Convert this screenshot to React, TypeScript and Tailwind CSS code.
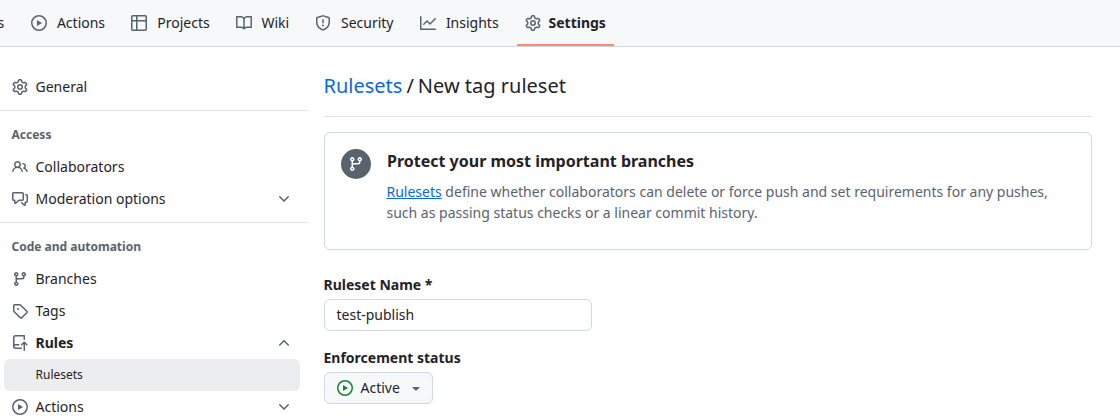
import type { ReactNode } from "react";

const paths = {
  play: "M8 0a8 8 0 1 1 0 16A8 8 0 0 1 8 0ZM1.5 8a6.5 6.5 0 1 0 13 0 6.5 6.5 0 0 0-13 0Zm4.879-2.773 4.264 2.559a.25.25 0 0 1 0 .428l-4.264 2.559A.25.25 0 0 1 6 10.559V5.442a.25.25 0 0 1 .379-.215Z",
  table:
    "M0 1.75C0 .784.784 0 1.75 0h12.5C15.216 0 16 .784 16 1.75v12.5A1.75 1.75 0 0 1 14.25 16H1.75A1.75 1.75 0 0 1 0 14.25ZM6.5 6.5v8h7.75a.25.25 0 0 0 .25-.25V6.5Zm8-1.5V1.75a.25.25 0 0 0-.25-.25H6.5V5Zm-13 1.5v7.75c0 .138.112.25.25.25H5v-8ZM5 5V1.5H1.75a.25.25 0 0 0-.25.25V5Z",
  book: "M0 1.75A.75.75 0 0 1 .75 1h4.253c1.227 0 2.317.59 3 1.501A3.743 3.743 0 0 1 11.006 1h4.245a.75.75 0 0 1 .75.75v10.5a.75.75 0 0 1-.75.75h-4.507a2.25 2.25 0 0 0-1.591.659l-.622.621a.75.75 0 0 1-1.06 0l-.622-.621A2.25 2.25 0 0 0 5.258 13H.75a.75.75 0 0 1-.75-.75Zm7.251 10.324.004-5.073-.002-2.253A2.25 2.25 0 0 0 5.003 2.5H1.5v9h3.757a3.75 3.75 0 0 1 1.994.574ZM8.755 4.75l-.004 7.322a3.752 3.752 0 0 1 1.992-.572H14.5v-9h-3.495a2.25 2.25 0 0 0-2.25 2.25Z",
  shield:
    "M7.467.133a1.748 1.748 0 0 1 1.066 0l5.25 1.68A1.75 1.75 0 0 1 15 3.48V7c0 1.566-.32 3.182-1.303 4.682-.983 1.498-2.585 2.813-5.032 3.855a1.697 1.697 0 0 1-1.33 0c-2.447-1.042-4.049-2.357-5.032-3.855C1.32 10.182 1 8.566 1 7V3.48a1.75 1.75 0 0 1 1.217-1.667Zm.61 1.429a.25.25 0 0 0-.153 0l-5.25 1.68a.25.25 0 0 0-.174.238V7c0 1.358.275 2.666 1.057 3.86.784 1.194 2.121 2.34 4.366 3.297a.196.196 0 0 0 .154 0c2.245-.956 3.582-2.104 4.366-3.298C13.225 9.666 13.5 8.36 13.5 7V3.48a.251.251 0 0 0-.174-.237l-5.25-1.68ZM8.75 4.75v3a.75.75 0 0 1-1.5 0v-3a.75.75 0 0 1 1.5 0ZM9 10.5a1 1 0 1 1-2 0 1 1 0 0 1 2 0Z",
  graph:
    "M1.5 1.75V13.5h13.75a.75.75 0 0 1 0 1.5H.75a.75.75 0 0 1-.75-.75V1.75a.75.75 0 0 1 1.5 0Zm14.28 2.53-5.25 5.25a.75.75 0 0 1-1.06 0L7 7.06 4.28 9.78a.751.751 0 0 1-1.042-.018.751.751 0 0 1-.018-1.042l3.25-3.25a.75.75 0 0 1 1.06 0L10 7.94l4.72-4.72a.751.751 0 0 1 1.042.018.751.751 0 0 1 .018 1.042Z",
  gear: "M8 0a8.2 8.2 0 0 1 .701.031C9.444.095 9.99.645 10.16 1.29l.288 1.107c.018.066.079.158.212.224.231.114.454.243.668.386.123.082.233.09.299.071l1.103-.303c.644-.176 1.392.021 1.82.63.27.385.506.792.704 1.218.315.675.111 1.422-.364 1.891l-.814.806c-.049.048-.098.147-.088.294.016.257.016.515 0 .772-.01.147.038.246.088.294l.814.806c.475.469.679 1.216.364 1.891a7.977 7.977 0 0 1-.704 1.217c-.428.61-1.176.807-1.82.63l-1.102-.302c-.067-.019-.177-.011-.3.071a5.909 5.909 0 0 1-.668.386c-.133.066-.194.158-.211.224l-.29 1.106c-.168.646-.715 1.196-1.458 1.26a8.006 8.006 0 0 1-1.402 0c-.743-.064-1.289-.614-1.458-1.26l-.289-1.106c-.018-.066-.079-.158-.212-.224a5.738 5.738 0 0 1-.668-.386c-.123-.082-.233-.09-.299-.071l-1.103.303c-.644.176-1.392-.021-1.82-.63a8.12 8.12 0 0 1-.704-1.218c-.315-.675-.111-1.422.363-1.891l.815-.806c.05-.048.098-.147.088-.294a6.214 6.214 0 0 1 0-.772c.01-.147-.038-.246-.088-.294l-.815-.806C.635 6.045.431 5.298.746 4.623a7.92 7.92 0 0 1 .704-1.217c.428-.61 1.176-.807 1.82-.63l1.102.302c.067.019.177.011.3-.071.214-.143.437-.272.668-.386.133-.066.194-.158.211-.224l.29-1.106C6.009.645 6.556.095 7.299.03 7.53.01 7.764 0 8 0Zm-.571 1.525c-.036.003-.108.036-.137.146l-.289 1.105c-.147.561-.549.967-.998 1.189-.173.086-.34.183-.5.29-.417.278-.97.423-1.529.27l-1.103-.303c-.109-.03-.175.016-.195.045-.22.312-.412.644-.573.99-.014.031-.021.11.059.19l.815.806c.411.406.562.957.53 1.456a4.709 4.709 0 0 0 0 .582c.032.499-.119 1.05-.53 1.456l-.815.806c-.081.08-.073.159-.059.19.162.346.353.677.573.989.02.03.085.076.195.046l1.102-.303c.56-.153 1.113-.008 1.53.27.161.107.328.204.501.29.447.222.85.629.997 1.189l.289 1.105c.029.109.101.143.137.146a6.6 6.6 0 0 0 1.142 0c.036-.003.108-.036.137-.146l.289-1.105c.147-.561.549-.967.998-1.189.173-.086.34-.183.5-.29.417-.278.97-.423 1.529-.27l1.103.303c.109.029.175-.016.195-.045.22-.313.411-.644.573-.99.014-.031.021-.11-.059-.19l-.815-.806c-.411-.406-.562-.957-.53-1.456a4.709 4.709 0 0 0 0-.582c-.032-.499.119-1.05.53-1.456l.815-.806c.081-.08.073-.159.059-.19a6.464 6.464 0 0 0-.573-.989c-.02-.03-.085-.076-.195-.046l-1.102.303c-.56.153-1.113.008-1.53-.27a4.44 4.44 0 0 0-.501-.29c-.447-.222-.85-.629-.997-1.189l-.289-1.105c-.029-.11-.101-.143-.137-.146a6.6 6.6 0 0 0-1.142 0ZM11 8a3 3 0 1 1-6 0 3 3 0 0 1 6 0ZM9.5 8a1.5 1.5 0 1 0-3.001.001A1.5 1.5 0 0 0 9.5 8Z",
  people:
    "M2 5.5a3.5 3.5 0 1 1 5.898 2.549 5.508 5.508 0 0 1 3.034 4.084.75.75 0 1 1-1.482.235 4 4 0 0 0-7.9 0 .75.75 0 0 1-1.482-.236A5.507 5.507 0 0 1 3.102 8.05 3.493 3.493 0 0 1 2 5.5ZM11 4a3.001 3.001 0 0 1 2.22 5.018 5.01 5.01 0 0 1 2.56 3.012.749.749 0 0 1-.885.954.752.752 0 0 1-.549-.514 3.507 3.507 0 0 0-2.522-2.372.75.75 0 0 1-.574-.73v-.352a.75.75 0 0 1 .416-.672A1.5 1.5 0 0 0 11 5.5.75.75 0 0 1 11 4Zm-5.5-.5a2 2 0 1 0-.001 3.999A2 2 0 0 0 5.5 3.5Z",
  discussion:
    "M1.75 1h8.5c.966 0 1.75.784 1.75 1.75v5.5A1.75 1.75 0 0 1 10.25 10H7.061l-2.574 2.573A1.458 1.458 0 0 1 2 11.543V10h-.25A1.75 1.75 0 0 1 0 8.25v-5.5C0 1.784.784 1 1.75 1ZM1.5 2.75v5.5c0 .138.112.25.25.25h1a.75.75 0 0 1 .75.75v2.19l2.72-2.72a.749.749 0 0 1 .53-.22h3.5a.25.25 0 0 0 .25-.25v-5.5a.25.25 0 0 0-.25-.25h-8.5a.25.25 0 0 0-.25.25Zm13 2a.25.25 0 0 0-.25-.25h-.5a.75.75 0 0 1 0-1.5h.5c.966 0 1.75.784 1.75 1.75v5.5A1.75 1.75 0 0 1 14.25 12H14v1.543a1.458 1.458 0 0 1-2.487 1.03L9.22 12.28a.749.749 0 0 1 .326-1.275.749.749 0 0 1 .734.215l2.22 2.22v-2.19a.75.75 0 0 1 .75-.75h1a.25.25 0 0 0 .25-.25Z",
  branch:
    "M9.5 3.25a2.25 2.25 0 1 1 3 2.122V6A2.5 2.5 0 0 1 10 8.5H6a1 1 0 0 0-1 1v1.128a2.251 2.251 0 1 1-1.5 0V5.372a2.25 2.25 0 1 1 1.5 0v1.836A2.493 2.493 0 0 1 6 7h4a1 1 0 0 0 1-1v-.628A2.25 2.25 0 0 1 9.5 3.25Zm-6 0a.75.75 0 1 0 1.5 0 .75.75 0 0 0-1.5 0Zm8.25-.75a.75.75 0 1 0 0 1.5.75.75 0 0 0 0-1.5ZM4.25 12a.75.75 0 1 0 0 1.5.75.75 0 0 0 0-1.5Z",
  tag: "M1 7.775V2.75C1 1.784 1.784 1 2.75 1h5.025c.464 0 .91.184 1.238.513l6.25 6.25a1.75 1.75 0 0 1 0 2.474l-5.026 5.026a1.75 1.75 0 0 1-2.474 0l-6.25-6.25A1.752 1.752 0 0 1 1 7.775Zm1.5 0c0 .066.026.13.073.177l6.25 6.25a.25.25 0 0 0 .354 0l5.025-5.025a.25.25 0 0 0 0-.354l-6.25-6.25a.25.25 0 0 0-.177-.073H2.75a.25.25 0 0 0-.25.25ZM6 5a1 1 0 1 1 0 2 1 1 0 0 1 0-2Z",
  repoPush:
    "M1 2.5A2.5 2.5 0 0 1 3.5 0h8.75a.75.75 0 0 1 .75.75v3.5a.75.75 0 0 1-1.5 0V1.5h-8a1 1 0 0 0-1 1v6.708A2.493 2.493 0 0 1 3.5 9h3.25a.75.75 0 0 1 0 1.5H3.5a1 1 0 0 0 0 2h5.75a.75.75 0 0 1 0 1.5H3.5A2.5 2.5 0 0 1 1 11.5Zm13.23 7.79-1.224-1.224v6.184a.75.75 0 0 1-1.5 0V9.066L10.28 10.29a.75.75 0 0 1-1.06-1.061l2.505-2.504a.75.75 0 0 1 1.06 0L15.29 9.23a.751.751 0 0 1-.018 1.042.751.751 0 0 1-1.042.018Z",
  down: "M12.78 5.22a.749.749 0 0 1 0 1.06l-4.25 4.25a.749.749 0 0 1-1.06 0L3.22 6.28a.749.749 0 1 1 1.06-1.06L8 8.939l3.72-3.719a.749.749 0 0 1 1.06 0Z",
  up: "M3.22 10.53a.749.749 0 0 1 0-1.06l4.25-4.25a.749.749 0 0 1 1.06 0l4.25 4.25a.749.749 0 1 1-1.06 1.06L8 6.811 4.28 10.53a.749.749 0 0 1-1.06 0Z",
  triangle:
    "m4.427 7.427 3.396 3.396a.25.25 0 0 0 .354 0l3.396-3.396A.25.25 0 0 0 11.396 7H4.604a.25.25 0 0 0-.177.427Z",
};

type IconName = keyof typeof paths;

function Icon({ name, className = "text-[#59636e]" }: { name: IconName; className?: string }) {
  return (
    <svg viewBox="0 0 16 16" width="16" height="16" fill="currentColor" className={`shrink-0 ${className}`}>
      <path d={paths[name]} />
    </svg>
  );
}

const tabs: { icon: IconName; label: string; width: string }[] = [
  { icon: "play", label: "Actions", width: "w-[52px] pl-[0.5px]" },
  { icon: "table", label: "Projects", width: "w-[57px] pl-[0.5px]" },
  { icon: "book", label: "Wiki", width: "w-[31px]" },
  { icon: "shield", label: "Security", width: "w-[57px]" },
  { icon: "graph", label: "Insights", width: "w-[57px]" },
];

function TopNav() {
  return (
    <nav className="flex h-[47px] shrink-0 border-b border-[#d1d9e0] bg-[#f6f8fa]">
      <span className="flex w-[15px] items-center pb-px">
        <span className="-ml-[2px]">s</span>
      </span>
      <div className="flex gap-2 pl-2">
        {tabs.map((t) => (
          <a key={t.label} className="flex items-center gap-2 px-2">
            <Icon name={t.icon} />
            <span className={`text-center whitespace-nowrap ${t.width}`}>{t.label}</span>
          </a>
        ))}
        <a className="flex items-center gap-2 border-b-2 border-[#fd8c73] px-2 pt-0.5 font-bold">
          <Icon name="gear" />
          <span className="w-[56.5px] whitespace-nowrap">Settings</span>
        </a>
      </div>
    </nav>
  );
}

function Item({ icon, children, chevron, bold }: { icon: IconName; children: ReactNode; chevron?: "up" | "down"; bold?: boolean }) {
  return (
    <a className={bold ? "flex h-8 items-center gap-2 pr-4 pl-3 font-bold" : "flex h-8 items-center gap-2 pr-4 pl-3"}>
      <Icon name={icon} />
      <span className="grow">{children}</span>
      {chevron && <Icon name={chevron} />}
    </a>
  );
}

function Sidebar() {
  const heading = "flex h-8 items-center pl-3 text-xs font-bold text-[#59636e]";
  return (
    <aside className="w-[308px] shrink-0 pt-6">
      <Item icon="gear">General</Item>
      <div className="mt-[7px] mb-2 h-px bg-[#dfe4e9]" />
      <h3 className={heading}>Access</h3>
      <Item icon="people">Collaborators</Item>
      <Item icon="discussion" chevron="down">Moderation options</Item>
      <div className="mt-[7px] mb-2 h-px bg-[#dfe4e9]" />
      <h3 className={heading}>Code and automation</h3>
      <Item icon="branch">Branches</Item>
      <Item icon="tag">Tags</Item>
      <Item icon="repoPush" chevron="up" bold>Rules</Item>
      <a className="mr-2 ml-1 flex h-8 items-center rounded-md bg-[#ecedef] pl-8 text-xs">Rulesets</a>
      <Item icon="play" chevron="down">Actions</Item>
    </aside>
  );
}

function Content() {
  return (
    <main className="ml-4 w-[768px] shrink-0 pt-6">
      <h2 className="flex h-[46px] border-b border-[#dfe4e9] text-xl leading-[30px]">
        <a className="text-[#0969da]">Rulesets</a>
        <span className="ml-[4.5px]">/</span>
        <span className="ml-[4.5px]">New tag ruleset</span>
      </h2>
      <section className="mt-[15px] flex h-[118px] gap-4 rounded-md border border-[#d1d9e0] p-4">
        <div className="flex size-[30px] shrink-0 items-center justify-center rounded-full bg-[#59636e]">
          <Icon name="branch" className="text-white" />
        </div>
        <div>
          <h3 className="indent-0 text-base leading-6 font-bold">Protect your most important branches</h3>
          <p className="mt-2 -ml-[0.5px] indent-0 leading-[21px] whitespace-nowrap text-[#59636e]">
            <a className="text-[#0969da] underline">Rulesets</a> define whether collaborators can delete or force push and set requirements for any pushes,
            <br />
            such as passing status checks or a linear commit history.
          </p>
        </div>
      </section>
      <label className="mt-6 block leading-[21px] font-bold">Ruleset Name *</label>
      <div className="mt-1 flex h-8 w-[268px] items-center rounded-md border border-[#d1d9e0] px-3">test-publish</div>
      <label className="mt-4 block leading-[21px] font-bold">Enforcement status</label>
      <button className="mt-1 flex h-8 w-[109px] items-center rounded-md border border-[#d1d9e0] bg-[#f6f8fa] pl-3">
        <Icon name="play" className="text-[#1a7f37]" />
        <span className="ml-2 indent-[-0.5px]">Active</span>
        <Icon name="triangle" className="ml-2 text-[#59636e]" />
      </button>
    </main>
  );
}

export default function App() {
  return (
    <div className="flex h-[416px] w-[1120px] flex-col overflow-hidden bg-white font-['Noto_Sans',sans-serif] indent-[-0.5px] text-sm text-[#1f2328]">
      <TopNav />
      <div className="flex">
        <Sidebar />
        <Content />
      </div>
    </div>
  );
}
